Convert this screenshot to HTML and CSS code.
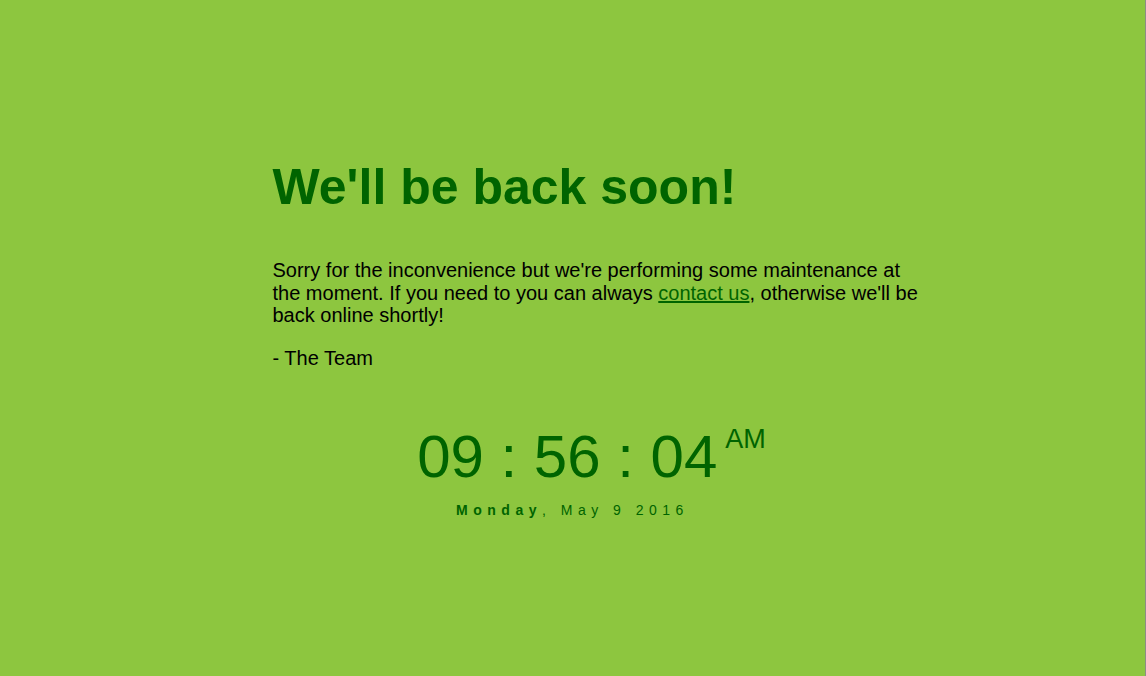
FILE: index.html
```
<!DOCTYPE html>
<html>
<head>
<meta charset="utf-8">
<title>Site Maintenance</title>
<link rel="stylesheet" href="styles.css">
</head>
<body>
<main class="page">
  <article class="article">
    <h1 class="title">We'll be back soon!</h1>
    <div class="body">
      <p class="para">Sorry for the inconvenience but we're performing some maintenance at the moment. If you need to you can always <a class="link" href="#">contact us</a>, otherwise we'll be back online shortly!</p>
      <p class="para">- The Team</p>
    </div>
  </article>
  <section class="clock">
    <div class="time"><span class="digits">09 : 56 : 04</span><span class="ampm">AM</span></div>
    <div class="date"><b class="day">Monday</b>, May 9 2016</div>
  </section>
</main>
</body>
</html>
```
FILE: styles.css
```
html, body {
  margin: 0;
  padding: 0;
  height: 100%;
}
body {
  background: #8dc63f;
  font-family: "Liberation Sans", Helvetica, Arial, sans-serif;
  color: #000;
  border-right: 1px solid #8a8f86;
  box-sizing: border-box;
}
.page {
  padding: 158px 0 0 50px;
}
.article {
  width: 650px;
  margin: 0 auto;
}
.title {
  margin: 0;
  font-size: 50px;
  font-weight: bold;
  color: #006400;
}
.body {
  margin-top: 43px;
  font-size: 20px;
  line-height: 22.5px;
}
.para {
  margin: 0 0 20px;
}
.link {
  color: #006400;
  text-decoration: underline;
}
.clock {
  margin-top: 54px;
  margin-left: -50px;
  text-align: center;
  color: #006400;
}
.time {
  display: flex;
  justify-content: center;
  align-items: flex-start;
  padding-left: 38px;
}
.digits {
  font-size: 60px;
  line-height: 68px;
}
.ampm {
  font-size: 27px;
  margin-left: 8px;
  margin-top: 1px;
}
.date {
  margin-top: 11px;
  font-size: 14px;
  letter-spacing: 5.5px;
}
.day {
  font-weight: bold;
}
```
